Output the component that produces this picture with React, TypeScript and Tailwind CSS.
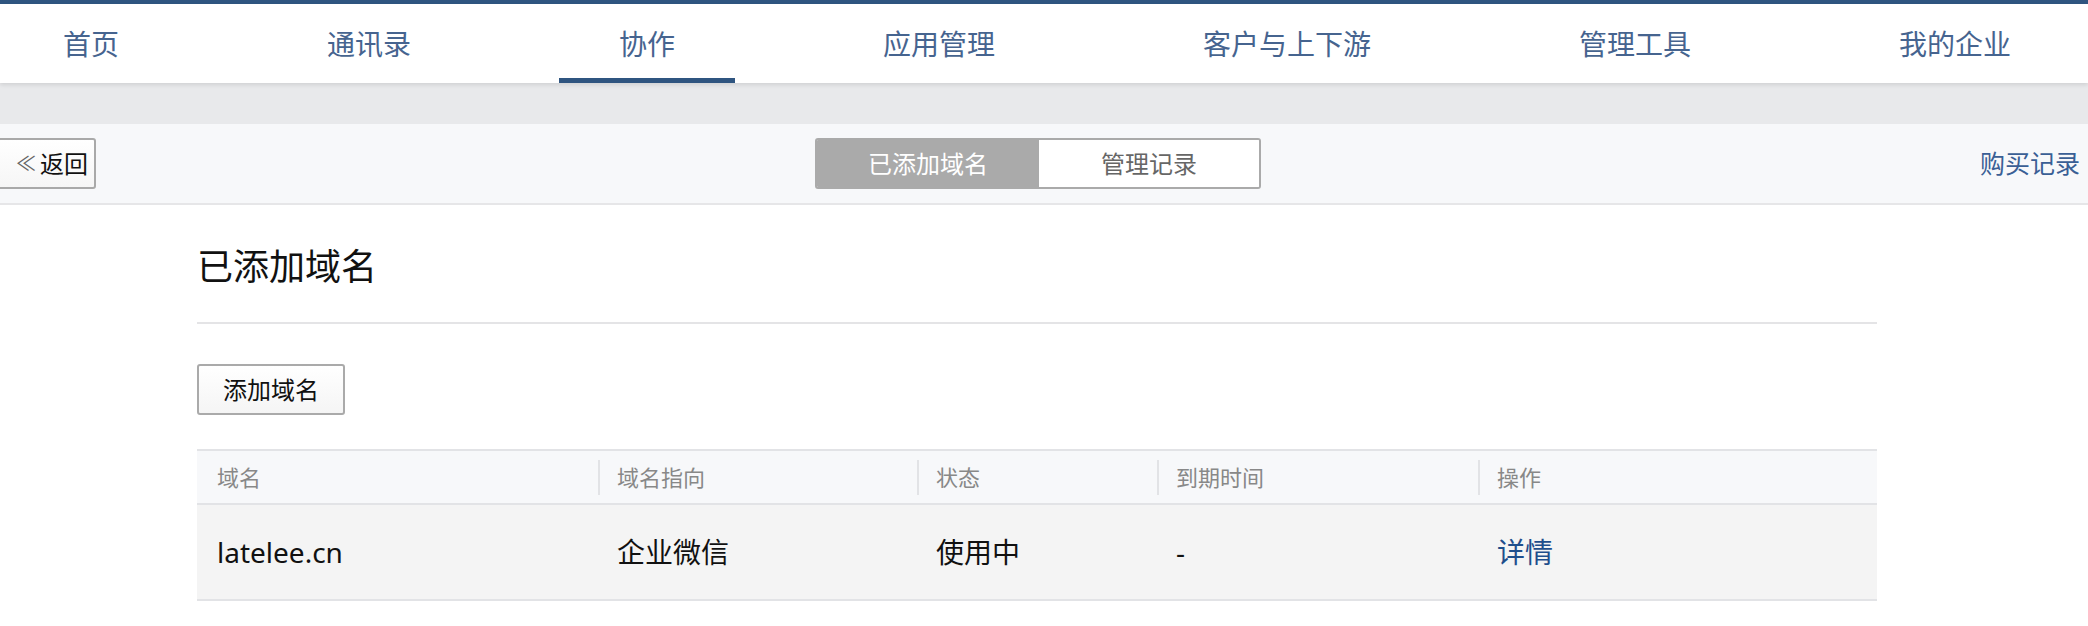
const navItems = ["首页", "通讯录", "协作", "应用管理", "客户与上下游", "管理工具", "我的企业"];

const cols = [
  { title: "域名", w: "w-[401px]" },
  { title: "域名指向", w: "w-[319px]" },
  { title: "状态", w: "w-[240px]" },
  { title: "到期时间", w: "w-[321px]" },
  { title: "操作", w: "w-[399px]" },
];

export default function App() {
  return (
    <div className="w-[2088px] min-h-[626px] bg-white font-['Noto_Sans','Noto_Sans_CJK_SC',sans-serif] overflow-hidden">
      <div className="h-[4px] bg-[#2f5580]" />

      <nav className="relative z-10 flex h-[79px] justify-between bg-white pl-[3px] pr-[17px] shadow-[0_2px_4px_rgba(0,0,0,0.1)]">
        {navItems.map((item) => (
          <div
            key={item}
            className={
              "flex items-center border-b-[5px] px-[60px] pt-[5px] text-[28px] text-[#46648f] " +
              (item === "协作" ? "border-[#2f5580]" : "border-transparent")
            }
          >
            {item}
          </div>
        ))}
      </nav>

      <div className="h-[41px] bg-[#e8e9eb]" />

      <div className="flex h-[81px] items-center justify-between border-b-2 border-[#e6e6e8] bg-[#f7f8fa] pr-[8px]">
        <button className="-ml-[4px] flex h-[51px] w-[100px] items-center rounded-[3px] border-2 border-[#a9a9a9] bg-gradient-to-b from-white to-[#f6f6f6] pl-[18px] text-[24px] text-[#111]">
          <span className="mr-[4px] text-[20px] text-[#666]">≪</span>返回
        </button>

        <div className="flex h-[51px] w-[446px] overflow-hidden rounded-[3px] border-2 border-[#aaaaaa] text-[24px]">
          <div className="flex w-[222px] items-center justify-center bg-[#aaaaaa] text-white">已添加域名</div>
          <div className="flex flex-1 items-center justify-center bg-white text-[#666]">管理记录</div>
        </div>

        <a className="text-[25px] text-[#3a5f95]">购买记录</a>
      </div>

      <div className="ml-[197px] w-[1680px]">
        <div className="flex h-[117px] items-center pt-[7px] text-[36px] text-[#111]">已添加域名</div>
        <div className="border-t-2 border-[#e4e4e6]" />

        <button className="mt-[40px] h-[51px] w-[148px] rounded-[3px] border-2 border-[#aaaaaa] bg-gradient-to-b from-white to-[#f5f5f5] text-[24px] text-[#111]">
          添加域名
        </button>

        <div className="mt-[34px] border-y-2 border-[#e2e3e6]">
          <div className="flex h-[54px] border-b-2 border-[#e2e3e6] bg-[#f7f8fa] text-[22px] text-[#888]">
            {cols.map((c, i) => (
              <div key={c.title} className={"flex items-center " + c.w}>
                {i > 0 && <div className="h-[35px] w-[2px] bg-[#e2e3e6]" />}
                <span className={i > 0 ? "pl-[17px]" : "pl-[20px]"}>{c.title}</span>
              </div>
            ))}
          </div>
          <div className="flex h-[94px] bg-[#f4f4f4] text-[28px] text-[#111]">
            <div className="flex w-[401px] items-center pl-[20px]">latelee.cn</div>
            <div className="flex w-[319px] items-center pl-[19px]">企业微信</div>
            <div className="flex w-[240px] items-center pl-[19px]">使用中</div>
            <div className="flex w-[321px] items-center pl-[19px]">-</div>
            <div className="flex w-[399px] items-center pl-[19px] text-[#1f4e8c]">详情</div>
          </div>
        </div>
      </div>
    </div>
  );
}
